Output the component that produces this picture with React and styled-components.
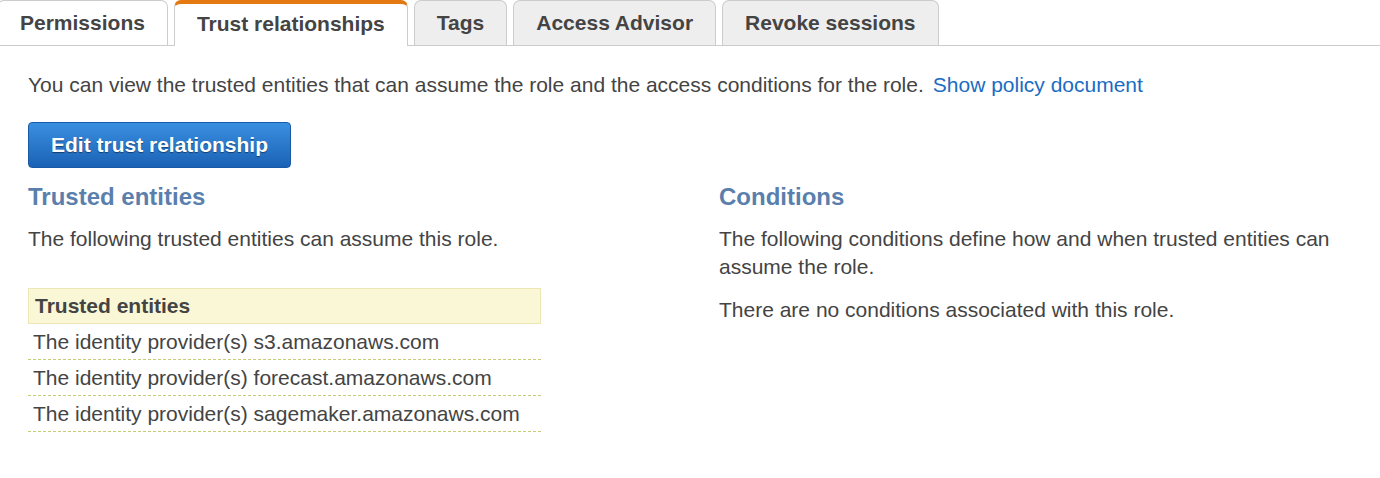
import styled, { createGlobalStyle } from "styled-components";

const GlobalStyle = createGlobalStyle`
  body {
    margin: 0;
    background: #fff;
    font-family: "Liberation Sans", Arial, sans-serif;
    color: #444;
  }
`;

const Page = styled.div`
  width: 1380px;
  height: 478px;
  overflow: hidden;
`;

const TabBar = styled.div`
  display: flex;
  align-items: flex-end;
  gap: 6px;
  height: 45px;
  border-bottom: 1px solid #ccc;
  margin-left: -3px;
`;

const Tab = styled.div`
  box-sizing: border-box;
  height: ${({ active }) => (active ? "46px" : "45px")};
  margin-bottom: ${({ active }) => (active ? "-1px" : "0")};
  padding: 0 22px;
  display: flex;
  align-items: center;
  font-size: 21px;
  font-weight: bold;
  color: #444;
  background: ${({ light }) => (light ? "#fff" : "#eee")};
  border: 1px solid #ccc;
  border-bottom: none;
  border-radius: 7px 7px 0 0;
  cursor: pointer;

  ${({ active }) =>
    active &&
    `
    background: #fff;
    border-top: 4px solid #e47911;
    padding-bottom: 3px;
  `};
`;

const Content = styled.div`
  padding: 25px 28px 0 28px;
`;

const Intro = styled.p`
  margin: 0;
  font-size: 21px;
  line-height: 28px;
`;

const Link = styled.a`
  color: #1a6cc2;
  text-decoration: none;
  margin-left: 9px;
  cursor: pointer;
`;

const Button = styled.button`
  margin-top: 23px;
  height: 46px;
  padding: 0 22px;
  font-family: "Liberation Sans", Arial, sans-serif;
  font-size: 21px;
  font-weight: bold;
  color: #fff;
  text-shadow: 0 1px 1px rgba(0, 0, 0, 0.45);
  background: linear-gradient(#3a8fe0, #1b62b6);
  border: 1px solid #1a5aa5;
  border-radius: 4px;
  cursor: pointer;
`;

const Columns = styled.div`
  display: grid;
  grid-template-columns: 691px 1fr;
  margin-top: 14px;
`;

const Heading = styled.h3`
  margin: 0;
  font-size: 24px;
  line-height: 30px;
  font-weight: bold;
  color: #5a7fad;
`;

const Text = styled.p`
  margin: 13px 0 0;
  font-size: 21px;
  line-height: 28px;
  & + & {
    margin-top: 15px;
  }
`;

const Table = styled.div`
  width: 513px;
  margin-top: 35px;
  font-size: 21px;
`;

const HeadCell = styled.div`
  box-sizing: border-box;
  height: 36px;
  padding: 0 6px;
  display: flex;
  align-items: center;
  font-weight: bold;
  background: #faf7d6;
  border: 1px solid #ece7b4;
`;

const Row = styled.div`
  box-sizing: border-box;
  height: 36px;
  padding: 0 5px;
  display: flex;
  align-items: center;
  border-bottom: 1px dashed #c6cc72;
`;

const tabs = [
  { name: "Permissions", light: true },
  { name: "Trust relationships", active: true },
  { name: "Tags" },
  { name: "Access Advisor" },
  { name: "Revoke sessions" },
];

const providers = [
  "s3.amazonaws.com",
  "forecast.amazonaws.com",
  "sagemaker.amazonaws.com",
];

const App = () => {
  return (
    <Page>
      <GlobalStyle />
      <TabBar>
        {tabs.map((t) => (
          <Tab key={t.name} active={t.active} light={t.light}>
            {t.name}
          </Tab>
        ))}
      </TabBar>
      <Content>
        <Intro>
          You can view the trusted entities that can assume the role and the
          access conditions for the role.
          <Link>Show policy document</Link>
        </Intro>
        <Button>Edit trust relationship</Button>
        <Columns>
          <div>
            <Heading>Trusted entities</Heading>
            <Text>The following trusted entities can assume this role.</Text>
            <Table>
              <HeadCell>Trusted entities</HeadCell>
              {providers.map((p) => (
                <Row key={p}>The identity provider(s) {p}</Row>
              ))}
            </Table>
          </div>
          <div>
            <Heading>Conditions</Heading>
            <Text>
              The following conditions define how and when trusted entities can
              assume the role.
            </Text>
            <Text>There are no conditions associated with this role.</Text>
          </div>
        </Columns>
      </Content>
    </Page>
  );
};

export default App;
